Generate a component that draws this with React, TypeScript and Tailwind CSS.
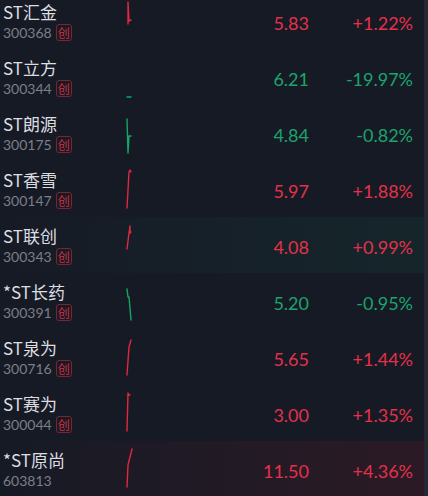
import React from 'react'

type Row = {
  name: string
  code: string
  chuang: boolean
  price: string
  change: string
  up: boolean
  spark: string
  bg?: 'green' | 'red'
}

const ROWS: Row[] = [
  { name: 'ST汇金', code: '300368', chuang: true, price: '5.83', change: '+1.22%', up: true, spark: 'M8 31 L8 9 L9 28 L11 27' },
  { name: 'ST立方', code: '300344', chuang: true, price: '6.21', change: '-19.97%', up: false, spark: 'M7 48 L11 48' },
  { name: 'ST朗源', code: '300175', chuang: true, price: '4.84', change: '-0.82%', up: false, spark: 'M7 14 L8 48 L9 31 L11 31' },
  { name: 'ST香雪', code: '300147', chuang: true, price: '5.97', change: '+1.88%', up: true, spark: 'M7 47 L9 11 L10 9 L11 11' },
  { name: 'ST联创', code: '300343', chuang: true, price: '4.08', change: '+0.99%', up: true, spark: 'M7 32 L9 16 L10 9 L10 16 L11 15', bg: 'green' },
  { name: '*ST长药', code: '300391', chuang: true, price: '5.20', change: '-0.95%', up: false, spark: 'M7 16 L8 24 L9 24 L11 47' },
  { name: 'ST泉为', code: '300716', chuang: true, price: '5.65', change: '+1.44%', up: true, spark: 'M7 46 L9 18 L11 11' },
  { name: 'ST赛为', code: '300044', chuang: true, price: '3.00', change: '+1.35%', up: true, spark: 'M7 46 L8 8 L9 10 L10 10' },
  { name: '*ST原尚', code: '603813', chuang: false, price: '11.50', change: '+4.36%', up: true, spark: 'M7 46 L8 24 L12 8', bg: 'red' },
]

function StockRow({ r }: { r: Row }) {
  const color = r.up ? 'text-[#e5304a]' : 'text-[#1ba46c]'
  const stroke = r.up ? '#e0283f' : '#12a863'
  const bg =
    r.bg === 'green'
      ? 'bg-gradient-to-r from-[#161a25] to-[#15262b]'
      : r.bg === 'red'
        ? 'bg-gradient-to-r from-[#161a25] to-[#2b1a25]'
        : ''
  return (
    <div className={`flex items-center h-[56px] ${bg}`}>
      <div className="w-[120px] pl-[3px] pt-[1px] flex flex-col">
        <div className="text-[17px] leading-[22px] text-[#dcdde1]">{r.name}</div>
        <div className="flex items-center h-[20px] text-[#7b7f88]">
          <span className="font-['Lato',sans-serif] text-[14px]">{r.code}</span>
          {r.chuang && (
            <span className="ml-[4px] w-[16px] h-[17px] flex items-center justify-center border border-[#7c2430] rounded-[3px] text-[12px] leading-none text-[#d42c40]">
              创
            </span>
          )}
        </div>
      </div>
      <svg width="16" height="56" viewBox="0 0 16 56" className="shrink-0">
        <path d={r.spark} fill="none" stroke={stroke} strokeWidth="1.4" strokeLinejoin="round" strokeLinecap="round" />
      </svg>
      <div className={`w-[173px] text-right text-[18px] pt-[4px] font-['Lato',sans-serif] ${color}`}>
        {r.price}
      </div>
      <div className={`w-[104px] text-right text-[18px] pt-[4px] font-['Lato',sans-serif] ${color}`}>
        {r.change}
      </div>
    </div>
  )
}

export default function App() {
  return (
    <div className="w-[428px] h-[496px] overflow-hidden bg-[#161a25] flex font-['Noto_Sans_CJK_SC',sans-serif]">
      <div className="flex-1 -mt-[7px]">
        {ROWS.map((r) => (
          <StockRow key={r.code} r={r} />
        ))}
      </div>
      <div className="w-[4px] bg-[#242831]" />
    </div>
  )
}
